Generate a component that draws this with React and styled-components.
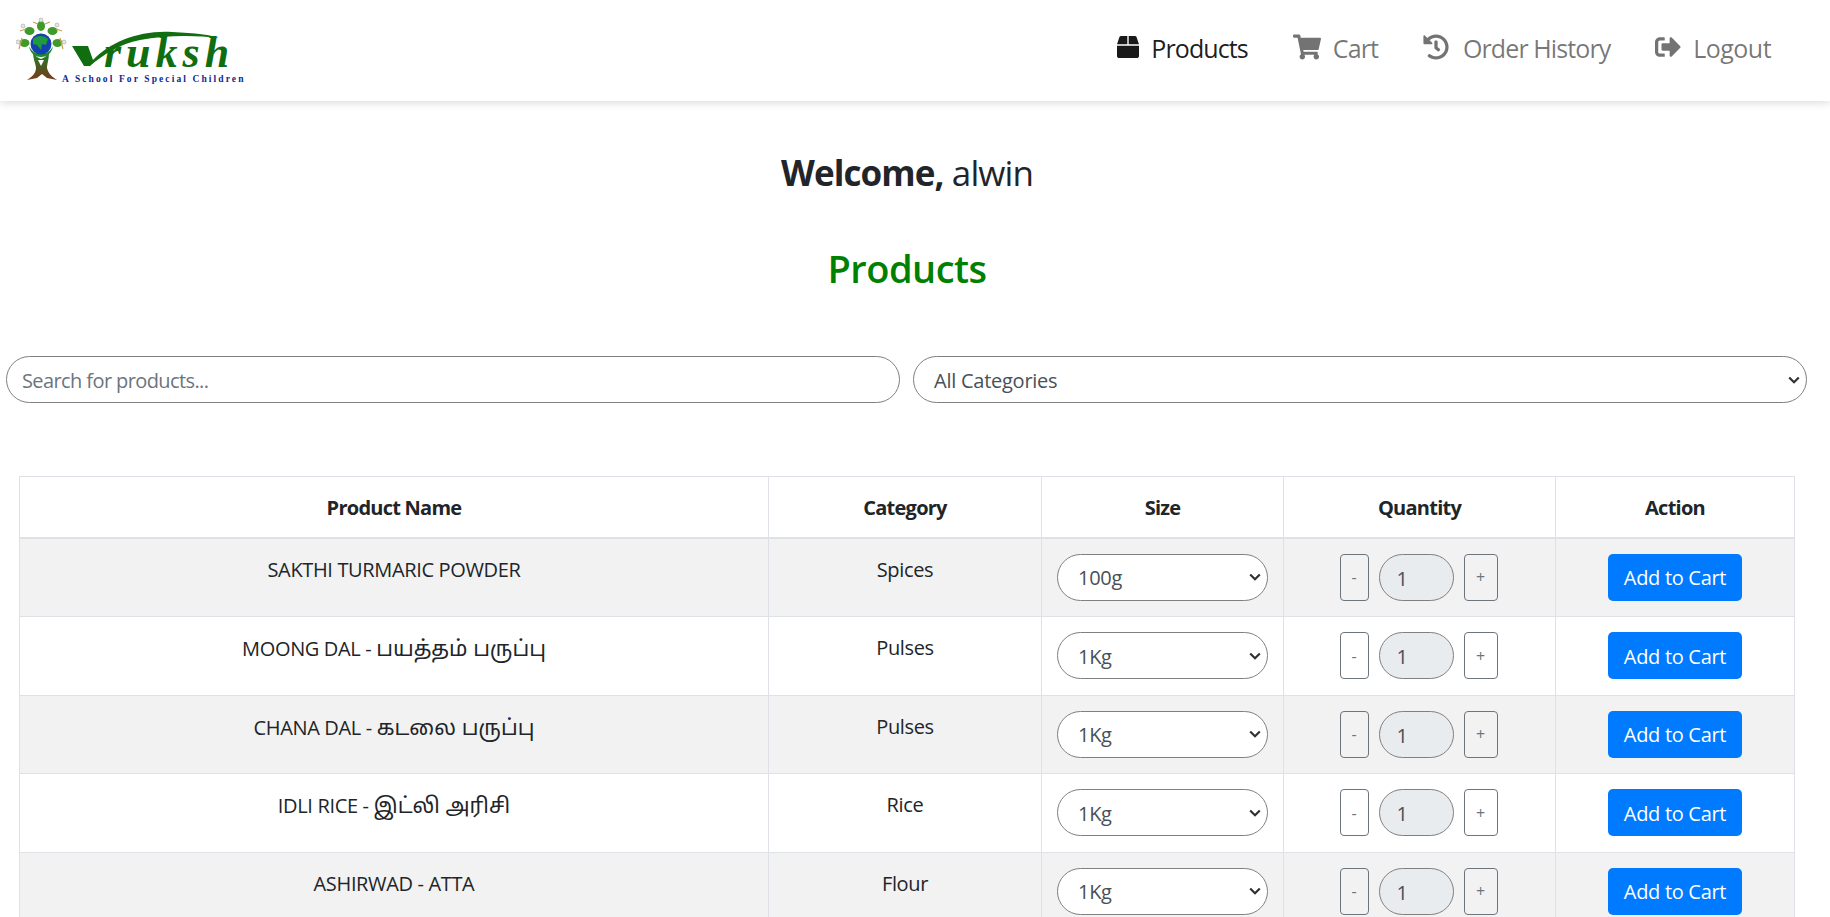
import styled, { createGlobalStyle, css } from "styled-components";
import { FaBox, FaShoppingCart, FaHistory, FaSignOutAlt } from "react-icons/fa";

const GlobalStyle = createGlobalStyle`
  * { box-sizing: border-box; }
  html, body { margin: 0; height: 917px; overflow: hidden; background: #fff; }
  body {
    font-family: "Open Sans", "Noto Sans", "Noto Sans Tamil", sans-serif;
    color: #212529;
    font-size: 20px;
  }
`;

const chevron = css`
  appearance: none;
  background: #fff
    url("data:image/svg+xml,%3Csvg xmlns='http://www.w3.org/2000/svg' width='12' height='8' viewBox='0 0 12 8'%3E%3Cpath d='M1.2 1.5 L6 6.3 L10.8 1.5' fill='none' stroke='%23333' stroke-width='2.200'/%3E%3C/svg%3E")
    no-repeat right 6px center;
`;

const Navbar = styled.nav`
  height: 101px;
  display: flex;
  align-items: center;
  justify-content: space-between;
  padding: 0 59px 0 16px;
  background: #fff;
  box-shadow: 0 2px 8px rgba(0, 0, 0, 0.14);
`;

const NavLinks = styled.div`
  display: flex;
  gap: 45px;
  margin-top: -5px;
`;

const NavLink = styled.a`
  display: flex;
  align-items: center;
  gap: ${(props) => props.$gap || 12}px;
  font-size: 25px;
  letter-spacing: ${(props) => props.$spacing || -0.9}px;
  color: ${(props) => (props.$active ? "rgba(0, 0, 0, 0.9)" : "rgba(0, 0, 0, 0.55)")};

  svg {
    margin-top: -3px;
  }
`;

const Greeting = styled.h2`
  margin: 48px 0 0;
  font-size: 35px;
  line-height: 48px;
  font-weight: 400;
  text-align: center;
  letter-spacing: -0.9px;
  padding-right: 16px;

  b {
    font-weight: 700;
  }
`;

const Title = styled.h1`
  margin: 46px 0 0;
  font-size: 38px;
  line-height: 50px;
  font-weight: 600;
  color: green;
  text-align: center;
  letter-spacing: -0.5px;
  padding-right: 16px;
`;

const Filters = styled.div`
  display: grid;
  grid-template-columns: 1fr 1fr;
  gap: 13px;
  padding: 0 23px 0 6px;
  margin-top: 63px;
`;

const Search = styled.input`
  min-width: 0;
  height: 47px;
  padding: 2px 15px 0;
  border: 1px solid #808080;
  border-radius: 24px;
  background: #fff;
  font: inherit;
  letter-spacing: -0.6px;
  color: #212529;

  &::placeholder {
    color: #6c757d;
    opacity: 1;
  }
`;

const CategorySelect = styled.select`
  ${chevron}
  min-width: 0;
  height: 47px;
  padding: 2px 20px 0;
  border: 1px solid #808080;
  border-radius: 24px;
  font: inherit;
  letter-spacing: -0.25px;
  color: #495057;
`;

const Table = styled.table`
  width: 1775px;
  margin: 73px 0 0 19px;
  border-collapse: collapse;
  table-layout: fixed;
  letter-spacing: -0.35px;
`;

const Th = styled.th`
  height: 61px;
  padding-top: 2px;
  border: 1px solid #dee2e6;
  border-bottom: 2px solid #dee2e6;
  font-weight: 700;
  letter-spacing: -0.75px;
  text-align: center;
  vertical-align: middle;
  width: ${(props) => props.$w}px;
`;

const Row = styled.tr`
  background: ${(props) => (props.$striped ? "#f2f2f2" : "#fff")};
`;

const Td = styled.td`
  padding: 15px 16px 15.5px;
  border: 1px solid #dee2e6;
  text-align: center;
  vertical-align: top;
  line-height: 32px;
`;

const Tamil = styled.span`
  font-size: 21.5px;
  letter-spacing: 0;
`;

const SizeSelect = styled.select`
  ${chevron}
  display: block;
  width: 211px;
  height: 47px;
  margin: 0 0 0 -1px;
  padding: 2px 20px 0;
  border: 1px solid #808080;
  border-radius: 24px;
  font: inherit;
  letter-spacing: -0.3px;
  color: #495057;
`;

const QuantityBox = styled.div`
  display: flex;
  justify-content: center;
  gap: 10px;
  padding-right: 2px;
`;

const StepButton = styled.button`
  width: ${(props) => props.$w}px;
  height: 47px;
  padding: 0;
  border: 1px solid #6c757d;
  border-radius: 4px;
  background: transparent;
  color: #6c757d;
  font-family: inherit;
  font-size: 16px;
`;

const QuantityInput = styled.input`
  width: 75px;
  height: 47px;
  padding: 2px 0 0 17px;
  border: 1px solid #808080;
  border-radius: 24px;
  background: #e9ecef;
  font: inherit;
  color: #495057;
`;

const AddButton = styled.button`
  display: block;
  width: 134px;
  height: 47px;
  margin: 0 auto;
  padding: 2px 0 0;
  border: none;
  border-radius: 5px;
  background: #007bff;
  color: #fff;
  font: inherit;
  letter-spacing: -0.3px;
`;

const Logo = () => (
  <svg width="232" height="74" viewBox="16 14 232 74">
    <path d="M33 52 C35 56 38 58 41 59 C44 58 47 56 49 52 C49 60 47 64 47 68 C48 73 52 77 57 80 L47 78 L42 74 L37 78 L27 80 C32 77 36 73 36 68 C36 64 33 60 33 52 Z" fill="url(#trunk)" />
    <path d="M29 46 C30 54 36 57 41 57 C46 57 52 54 53 46 C51 51 46 54 41 54 C36 54 31 51 29 46 Z" fill="#1c8a2a" />
    <path d="M38 60 L44 60 L41 66 Z" fill="#fff" />
    <circle cx="41" cy="44" r="10.5" fill="#1440b0" />
    <path d="M33 39 C37 35 44 35 48 39 L46 45 L42 44 L41 50 L37 45 L33 44 Z" fill="#1f9a3c" />
    <g fill="#3f9a2a">
      <ellipse cx="29.500" cy="31" rx="5" ry="4" />
      <ellipse cx="41" cy="26" rx="4" ry="5" />
      <ellipse cx="52.500" cy="31" rx="5" ry="4" />
      <ellipse cx="24.500" cy="43" rx="5" ry="4" />
      <ellipse cx="57.500" cy="43" rx="5" ry="4" />
    </g>
    <g fill="none" stroke="#c9a24a" strokeWidth="1.200">
      <path d="M20 31 L26 29 M33 22 L38 24 M50 22 L45 24 M62 31 L56 29 M19 49 L22 38 M63 49 L60 38" />
    </g>
    <g fill="#e6e6e6" stroke="#999" strokeWidth="0.500">
      <circle cx="23" cy="26" r="2" />
      <circle cx="41" cy="20" r="2" />
      <circle cx="57" cy="25" r="2" />
      <circle cx="18" cy="42" r="2" />
      <circle cx="64" cy="42" r="2" />
    </g>
    <path d="M72 46 L88 46 L93 60 C110 42 140 30 172 32 C195 33 212 35 219 38 C195 35 165 35 140 40 C120 44 104 54 90 66 L84 66 Z" fill="#106d10" />
    <text x="104" y="67" fontFamily="Liberation Serif, serif" fontStyle="italic" fontWeight="700" fontSize="44" letterSpacing="5" fill="#106d10">ruksh</text>
    <text x="62" y="82" fontFamily="Liberation Serif, serif" fontWeight="700" fontSize="9.500" letterSpacing="2.100" fill="#10288c">A School For Special Children</text>
    <defs>
      <linearGradient id="trunk" x1="0" y1="0" x2="0" y2="1">
        <stop offset="0" stopColor="#1c8a2a" />
        <stop offset="0.5" stopColor="#4a5a20" />
        <stop offset="1" stopColor="#7a3a1a" />
      </linearGradient>
    </defs>
  </svg>
);

const products = [
  { name: "SAKTHI TURMARIC POWDER", category: "Spices", size: "100g" },
  { name: "MOONG DAL - ", tamil: "பயத்தம் பருப்பு", category: "Pulses", size: "1Kg" },
  { name: "CHANA DAL - ", tamil: "கடலை பருப்பு", category: "Pulses", size: "1Kg" },
  { name: "IDLI RICE - ", tamil: "இட்லி அரிசி", category: "Rice", size: "1Kg" },
  { name: "ASHIRWAD - ATTA", category: "Flour", size: "1Kg" },
];

const App = () => {
  return (
    <>
      <GlobalStyle />
      <Navbar>
        <Logo />
        <NavLinks>
          <NavLink $active><FaBox size={22} />Products</NavLink>
          <NavLink><FaShoppingCart size={28} />Cart</NavLink>
          <NavLink $gap={14}><FaHistory size={26} />Order History</NavLink>
          <NavLink $spacing={-0.55}><FaSignOutAlt size={26} />Logout</NavLink>
        </NavLinks>
      </Navbar>
      <Greeting><b>Welcome,</b> alwin</Greeting>
      <Title>Products</Title>
      <Filters>
        <Search placeholder="Search for products..." />
        <CategorySelect defaultValue="all">
          <option value="all">All Categories</option>
        </CategorySelect>
      </Filters>
      <Table>
        <thead>
          <tr>
            <Th $w={749}>Product Name</Th>
            <Th $w={273}>Category</Th>
            <Th $w={242}>Size</Th>
            <Th $w={272}>Quantity</Th>
            <Th $w={239}>Action</Th>
          </tr>
        </thead>
        <tbody>
          {products.map((product, index) => (
            <Row key={product.name} $striped={index % 2 === 0}>
              <Td>
                {product.name}
                {product.tamil && <Tamil>{product.tamil}</Tamil>}
              </Td>
              <Td>{product.category}</Td>
              <Td>
                <SizeSelect defaultValue={product.size}>
                  <option>{product.size}</option>
                </SizeSelect>
              </Td>
              <Td>
                <QuantityBox>
                  <StepButton $w={29}>-</StepButton>
                  <QuantityInput defaultValue="1" readOnly />
                  <StepButton $w={34}>+</StepButton>
                </QuantityBox>
              </Td>
              <Td>
                <AddButton>Add to Cart</AddButton>
              </Td>
            </Row>
          ))}
        </tbody>
      </Table>
    </>
  );
};

export default App;
